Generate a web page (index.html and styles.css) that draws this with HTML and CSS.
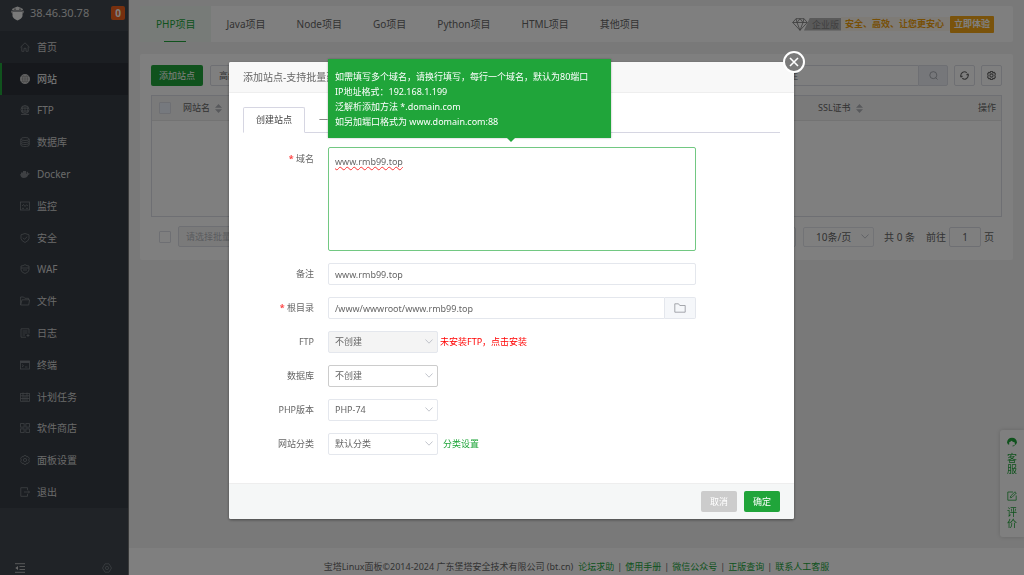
FILE: index.html
```html
<!DOCTYPE html>
<html lang="zh-CN">
<head>
<meta charset="utf-8">
<meta name="viewport" content="width=device-width, initial-scale=1">
<title>宝塔Linux面板</title>
<link rel="stylesheet" href="styles.css">
</head>
<body>
<div class="app">
  <aside class="sidebar">
    <header class="side-head">
      <svg class="logo" viewBox="0 0 13 15"><path d="M1 3 4 1.500 6.500.5 9 1.500 12 3 11.500 4.500H1.500Z" fill="#e4e4e4"/><path d="M1.500 5.500H11.500V10Q11 12.500 6.500 14.500 2 12.500 1.500 10Z" fill="#f4f4f4"/><path d="M0 4.500 2 5.500V8L.5 7ZM13 4.500 11 5.500V8L12.500 7Z" fill="#c4c4c4"/><path d="M3 3.200H5M8 3.200H10" stroke="#555" stroke-width=".8"/></svg>
      <span class="ip">38.46.30.78</span>
      <span class="badge">0</span>
    </header>
    <nav class="menu">
      <a href="#"><svg viewBox="0 0 10 10"><path d="M.5 5.200 5 .8 9.500 5.200M1.800 4.500V9.300H4V6.300H6V9.300H8.200V4.500"/></svg>首页</a>
      <a href="#" class="on"><svg viewBox="0 0 10 10"><circle cx="5" cy="5" r="4.600" fill="currentColor"/><path d="M5 .5V9.500M.5 5H9.500M1.300 2.800H8.700M1.300 7.200H8.700M3.500 1C2.300 3.500 2.300 6.500 3.500 9M6.500 1C7.700 3.500 7.700 6.500 6.500 9" stroke="#555" stroke-width=".4"/></svg>网站</a>
      <a href="#"><svg viewBox="0 0 10 10"><circle cx="5" cy="4.500" r="4"/><path d="M5 .5V8.500M1 3.200H9M1 6H9M3.200 1C2.300 3.500 2.300 5.500 3.200 8M6.800 1C7.700 3.500 7.700 5.500 6.800 8M1 9.500H9"/></svg>FTP</a>
      <a href="#"><svg viewBox="0 0 10 10"><ellipse cx="5" cy="2" rx="4.200" ry="1.500"/><path d="M.8 2V8C.8 10 9.200 10 9.200 8V2M.8 4C.8 6 9.200 6 9.200 4M.8 6C.8 8 9.200 8 9.200 6"/></svg>数据库</a>
      <a href="#"><svg viewBox="0 0 10 10"><path d="M.2 5H6.500Q6.300 3.500 7 2.500 8.300 3.300 8.300 4.300L9.800 4.500Q9.300 5.700 8.300 5.700 7 9 3.800 9 .5 8.800.2 5ZM1 3.600H6V5H1ZM3 2H6V4H3Z" fill="currentColor" stroke="none"/></svg>Docker</a>
      <a href="#"><svg viewBox="0 0 10 10"><rect x=".5" y="1" width="9" height="8"/><path d="M2 5 3.500 3.500 5 5.500 6.500 3.800 8 5M2 7.300H4M6 7.300H8"/></svg>监控</a>
      <a href="#"><svg viewBox="0 0 10 10"><path d="M5 .5 9 1.800V5.500Q8.500 8 5 9.500 1.500 8 1 5.500V1.800ZM3 4.800 4.500 6.300 7.200 3.700"/></svg>安全</a>
      <a href="#"><svg viewBox="0 0 10 10"><path d="M1 2Q3 2 5 .6 7 2 9 2V6Q8.500 8.500 5 9.500 1.500 8.500 1 6ZM1 4H9M3 6H7"/></svg>WAF</a>
      <a href="#"><svg viewBox="0 0 10 10"><path d="M.6 9V1H3.600L4.800 2.300H8.500V3.800M.6 9 2 3.800H9.600L8.700 9Z"/></svg>文件</a>
      <a href="#"><svg viewBox="0 0 10 10"><path d="M9 5.500V.8H1V9.200H6M2.500 3H7.500M2.500 5H7.500M2.500 7H5M6.500 7.500H9.500M8 6V9"/></svg>日志</a>
      <a href="#"><svg viewBox="0 0 10 10"><rect x=".5" y="1" width="9" height="8"/><path d="M.5 2H9.500" stroke-width="1.800"/><path d="M2 4.500 3.500 5.700 2 7M5 7H7.500"/></svg>终端</a>
      <a href="#"><svg viewBox="0 0 10 10"><rect x=".6" y="1.500" width="8.800" height="7.800"/><path d="M.6 3.800H9.400M3 .5V9M7 .5V9M5 3.800V9M.6 6.500H9.400"/></svg>计划任务</a>
      <a href="#"><svg viewBox="0 0 10 10"><rect x=".6" y=".6" width="3.500" height="3.500"/><rect x="5.900" y=".6" width="3.500" height="3.500"/><rect x=".6" y="5.900" width="3.500" height="3.500"/><rect x="5.900" y="5.900" width="3.500" height="3.500"/></svg>软件商店</a>
      <a href="#"><svg viewBox="0 0 10 10"><path d="M4 .6H6L6.500 1.800 8 1.600 9.300 3.300 8.700 5 9.300 6.700 8 8.400 6.500 8.200 6 9.400H4L3.500 8.200 2 8.400.7 6.700 1.300 5 .7 3.300 2 1.600 3.500 1.800Z"/><circle cx="5" cy="5" r="1.600"/></svg>面板设置</a>
      <a href="#"><svg viewBox="0 0 10 10"><path d="M7.500 3V.7H.8V9.300H7.500V7M4 5H9.500M8 3.500 9.500 5 8 6.500"/></svg>退出</a>
    </nav>
    <footer class="side-foot">
      <button aria-label="收起菜单"><svg viewBox="0 0 10 10"><path d="M0 .7H10M4.500 3.500H10M4.500 6.500H10M0 9.300H10" stroke="#ccc"/><path d="M3 3V7L.3 5Z" fill="#ccc" stroke="none"/></svg></button>
      <button aria-label="设置"><svg viewBox="0 0 10 10"><path d="M3 .8H7L9.500 5 7 9.200H3L.5 5Z"/><circle cx="5" cy="5" r="1.600"/></svg></button>
    </footer>
  </aside>

  <div class="page">
    <main class="main">
      <section class="topbar">
        <nav class="types">
          <a href="#" class="on">PHP项目</a><a href="#">Java项目</a><a href="#">Node项目</a><a href="#">Go项目</a><a href="#">Python项目</a><a href="#">HTML项目</a><a href="#">其他项目</a>
        </nav>
        <div class="promo">
          <svg class="gem" viewBox="0 0 16 13"><path d="M4 .7H12L15.300 4.500 8 12.300.7 4.500ZM.7 4.500H15.300M4 .7 5 4.500 8 12.300 11 4.500 12 .7M5 4.500 8 .7 11 4.500"/></svg>
          <span class="edition">企业版</span>
          <span class="slogan">安全、高效、让您更安心</span>
          <button class="try">立即体验</button>
        </div>
      </section>

      <section class="card">
        <div class="toolbar">
          <button class="btn primary">添加站点</button>
          <button class="btn plain">高级设置</button>
          <div class="tools">
            <div class="search"><input type="text" aria-label="搜索" placeholder="请输入域名或备注"><button aria-label="搜索"><svg viewBox="0 0 10 10"><circle cx="4.800" cy="4.600" r="3.900"/><path d="M7.500 7.500 9.500 9.500"/></svg></button></div>
            <button class="square" aria-label="刷新"><svg viewBox="0 0 10 10"><path d="M1.200 6.300A4 4 0 0 1 7.500 1.900M8.800 3.700A4 4 0 0 1 2.500 8.100M.1 5 1.200 6.600 2.800 5.500M9.900 5 8.800 3.400 7.200 4.500"/></svg></button>
            <button class="square" aria-label="列设置"><svg viewBox="0 0 10 10"><path d="M4 .6H6L6.500 1.800 8 1.600 9.300 3.300 8.700 5 9.300 6.700 8 8.400 6.500 8.200 6 9.400H4L3.500 8.200 2 8.400.7 6.700 1.300 5 .7 3.300 2 1.600 3.500 1.800Z"/><circle cx="5" cy="5" r="1.800"/></svg></button>
          </div>
        </div>
        <table class="sites">
          <thead><tr>
            <th class="c-check"><input type="checkbox" class="check tinted" aria-label="全选"></th>
            <th>网站名<svg class="sort" viewBox="0 0 7 9"><path d="M3.500 0 7 3.800H0ZM0 5.200H7L3.500 9Z"/></svg></th>
            <th class="c-ssl">SSL证书<svg class="sort" viewBox="0 0 7 9"><path d="M3.500 0 7 3.800H0ZM0 5.200H7L3.500 9Z"/></svg></th>
            <th class="c-op">操作</th>
          </tr></thead>
          <tbody><tr><td colspan="4"></td></tr></tbody>
        </table>
        <div class="pager">
          <input type="checkbox" class="check" aria-label="选择本页">
          <select class="batch" aria-label="批量操作" disabled><option>请选择批量操作</option></select>
          <div class="pages">
            <button class="turn" aria-label="下一页"></button>
            <div class="select"><select aria-label="每页条数"><option>10条/页</option></select><svg viewBox="0 0 8 5"><path d="M.5.5 4 4.200 7.500.5"/></svg></div>
            <span class="total">共 0 条</span>
            <label class="jump">前往<input type="text" value="1">页</label>
          </div>
        </div>
      </section>
    </main>
    <footer class="foot">
      <span>宝塔Linux面板©2014-2024 广东堡塔安全技术有限公司 (bt.cn)</span>
      <a href="#">论坛求助</a><i>|</i><a href="#">使用手册</a><i>|</i><a href="#">微信公众号</a><i>|</i><a href="#">正版查询</a><i>|</i><a href="#">联系人工客服</a>
    </footer>
  </div>

  <div class="float">
    <a href="#"><svg viewBox="0 0 10 10"><path d="M0 5.500Q.5 1 5 .8 9.500 1 10 5.500L9 7.500H7.800V5.500Q5.500 5 4.500 3.800 3.500 5 2.200 5.300V7.500H1Z" fill="currentColor" stroke="none"/><path d="M8.300 7.500Q7.500 9 5.500 9"/></svg>客服</a>
    <a href="#"><svg viewBox="0 0 10 10"><path d="M6 1H.8V9.200H9.200V4.500M3.300 6.700 3.700 5 8 .8 9.300 2 5 6.300Z"/></svg>评价</a>
  </div>
</div>

<div class="mask">
  <form class="modal" role="dialog" aria-labelledby="title">
    <button type="button" class="close" aria-label="关闭"><svg viewBox="0 0 10 10"><path d="M1 1 9 9M9 1 1 9"/></svg></button>
    <h1 class="modal-head" id="title">添加站点-支持批量建站</h1>
    <div class="modal-body">
      <div class="tabs"><button type="button" class="on">创建站点</button><button type="button">一键部署</button></div>
      <div class="row tall">
        <label for="domain"><b>*</b> 域名</label>
        <div class="field">
          <textarea id="domain" spellcheck="false">www.rmb99.top</textarea>
          <div class="tip" role="tooltip">如需填写多个域名，请换行填写，每行一个域名，默认为80端口<br>IP地址格式：192.168.1.199<br>泛解析添加方法 *.domain.com<br>如另加端口格式为 www.domain.com:88</div>
        </div>
      </div>
      <div class="row"><label for="remark">备注</label><div class="field"><input id="remark" type="text" value="www.rmb99.top"></div></div>
      <div class="row"><label for="root"><b>*</b> 根目录</label><div class="field joined"><input id="root" type="text" value="/www/wwwroot/www.rmb99.top"><button type="button" aria-label="选择目录"><svg viewBox="0 0 12 10"><path d="M.8.8H4.500L5.800 2.500H11.200V9.200H.8Z"/></svg></button></div></div>
      <div class="row"><label for="ftp">FTP</label><div class="select off"><select id="ftp" disabled><option>不创建</option></select><svg viewBox="0 0 8 5"><path d="M.5.5 4 4.200 7.500.5"/></svg></div><a href="#" class="warn">未安装FTP，点击安装</a></div>
      <div class="row"><label for="db">数据库</label><div class="select strong"><select id="db"><option>不创建</option></select><svg viewBox="0 0 8 5"><path d="M.5.5 4 4.200 7.500.5"/></svg></div></div>
      <div class="row"><label for="php">PHP版本</label><div class="select"><select id="php"><option>PHP-74</option></select><svg viewBox="0 0 8 5"><path d="M.5.5 4 4.200 7.500.5"/></svg></div></div>
      <div class="row"><label for="cat">网站分类</label><div class="select"><select id="cat"><option>默认分类</option></select><svg viewBox="0 0 8 5"><path d="M.5.5 4 4.200 7.500.5"/></svg></div><a href="#" class="more">分类设置</a></div>
    </div>
    <div class="modal-foot"><button type="button" class="btn cancel">取消</button><button type="submit" class="btn primary">确定</button></div>
  </form>
</div>
</body>
</html>
```
FILE: styles.css
```css
:root {
  --green: #20a53a;
  --line: #dcdfe6;
  --text: #666;
}

* { box-sizing: border-box; }

body {
  margin: 0;
  font: 9px/16px "Noto Sans", "Noto Sans CJK SC", sans-serif;
  color: var(--text);
  overflow: hidden;
}

button, input, select, textarea { font: inherit; color: inherit; margin: 0; }
button { border: 0; padding: 0; background: none; cursor: pointer; white-space: nowrap; }
select { appearance: none; }
a { color: inherit; text-decoration: none; }
svg { display: block; flex: none; fill: none; stroke: currentColor; stroke-width: 0.8; }
i { font-style: normal; }

.app { display: flex; min-height: 100vh; background: #f2f2f2; }

/* Sidebar */
.sidebar {
  display: flex;
  flex-direction: column;
  flex: none;
  width: 129px;
  height: 100vh;
  background: #40474f;
  border-right: 1px solid #777;
  color: #d4d4d4;
  font-size: 10px;
}
.side-head { display: flex; align-items: center; height: 31px; padding: 0 3px 5px 11px; }
.logo { width: 13px; height: 15px; stroke: none; }
.ip { margin-left: 6px; font-size: 11px; }
.badge {
  margin-left: auto;
  width: 14px;
  height: 14px;
  border-radius: 2px;
  background: #f0601c;
  color: #fff;
  font-weight: bold;
  line-height: 14px;
  text-align: center;
}
.menu { flex: 1; display: grid; grid-auto-rows: 1fr; background: #363c44; }
.menu a { display: flex; align-items: center; gap: 7px; padding-left: 18px; border-left: 2px solid transparent; }
.menu svg { width: 10px; height: 10px; color: #7c8187; }
.menu .on { background: #2c3138; border-color: var(--green); color: #fff; }
.menu .on svg { color: #d8d8d8; }
.side-foot {
  display: flex;
  justify-content: space-between;
  align-items: flex-end;
  height: 67px;
  padding: 0 16px 2px 15px;
  color: #777d84;
}
.side-foot svg { width: 10px; height: 10px; }

/* Page */
.page { flex: 1; min-width: 0; display: flex; flex-direction: column; }
.main { flex: 1; padding: 6px 11px; }
.topbar { display: flex; align-items: center; height: 36px; background: #fff; border-radius: 2px; padding-right: 19px; }
.types { display: flex; align-self: stretch; font-size: 10px; }
.types a { position: relative; display: flex; align-items: center; padding: 0 15px 0 16px; }
.types .on { background: #eef7f0; color: var(--green); }
.types .on::after { content: ""; position: absolute; left: 50%; bottom: 0; width: 22px; height: 1px; margin-left: -11px; background: var(--green); }

.promo { display: flex; align-items: center; margin-left: auto; color: #ee9f0c; font-weight: bold; }
.gem { width: 16px; height: 13px; color: #777; margin-right: -4px; position: relative; }
.edition { padding: 0 2px 0 8px; line-height: 13px; background: #b4b4b4; color: #808080; font-weight: normal; clip-path: polygon(6px 0, 100% 0, 100% 100%, 0 100%); }
.slogan { padding: 0 6px 0 4px; line-height: 14px; background: #fdf6ec; }
.try { height: 17px; padding: 0 4px; border-radius: 1px; background: #f4a716; color: #fff; font-weight: bold; }

.card { margin-top: 12px; padding: 11px 11px 13px; background: #fff; border-radius: 2px; }
.toolbar { display: flex; gap: 7px; }
.btn { min-width: 36px; height: 21px; padding: 0 8px; border-radius: 2px; }
.primary { background: var(--green); color: #fff; }
.plain { border: 1px solid var(--line); }
.tools { display: flex; gap: 6px; margin-left: auto; }
.search { display: flex; }
.search input { width: 200px; padding: 0 7px; border: 1px solid var(--line); border-right: 0; border-radius: 2px 0 0 2px; }
.search input::placeholder { color: #999; }
.search button { display: grid; place-items: center; width: 30px; background: #eceff5; border: 1px solid var(--line); border-radius: 0 2px 2px 0; color: #909399; }
.search svg, .square svg { width: 9px; height: 9px; }
.square { display: grid; place-items: center; width: 21px; height: 21px; border: 1px solid var(--line); border-radius: 2px; }
.square svg { stroke-width: 1.2; }

.sites { width: 100%; margin-top: 9px; border: 1px solid var(--line); border-spacing: 0; table-layout: fixed; }
.sites th { height: 25px; padding: 0; background: #f5f5f5; border-bottom: 1px solid #e6e6e6; font-weight: normal; text-align: left; }
.sites td { height: 95px; padding: 0; }
.c-check { width: 31px; }
.sites .c-check { padding-left: 7px; }
.c-ssl { width: 129px; }
.sites .c-op { width: 54px; padding-right: 5px; text-align: right; }
.sort { display: inline-block; width: 7px; height: 9px; margin-left: 5px; vertical-align: middle; fill: #b0b3b8; stroke: none; }
.check { appearance: none; display: block; flex: none; width: 12px; height: 12px; border: 1px solid var(--line); border-radius: 1px; background: #fff; }
.tinted { background: #edf2fc; }

.pager { display: flex; align-items: center; margin-top: 9px; padding: 0 8px; }
.batch { width: 110px; height: 21px; margin-left: 7px; padding: 0 7px; border: 1px solid var(--line); border-radius: 2px; background: #f5f5f5; color: #b4b7bd; opacity: 1; }
.pages { display: flex; align-items: center; margin-left: auto; font-size: 10px; }
.turn { width: 20px; height: 20px; margin-right: 7px; border: 1px solid var(--line); border-radius: 2px; }
.pages .select { width: 71px; }
.pages select { height: 20px; padding-left: 12px; }
.total { margin: 0 11px 0 10px; }
.jump { display: flex; align-items: center; gap: 3px; }
.jump input { width: 32px; height: 20px; border: 1px solid var(--line); border-radius: 2px; padding: 0; text-align: center; }

.foot { display: flex; justify-content: center; height: 27px; padding-top: 11px; background: #fff; white-space: nowrap; }
.foot a { color: var(--green); }
.foot span { margin-right: 5px; }
.foot i { width: 11px; text-align: center; }

.float {
  position: fixed;
  right: 0;
  bottom: 38px;
  display: grid;
  gap: 16px;
  width: 24px;
  padding: 7px 7px 8px;
  border-radius: 3px 0 0 3px;
  background: #fff;
  box-shadow: 0 0 4px rgba(0, 0, 0, 0.15);
  color: var(--green);
  font-size: 10px;
  line-height: 11px;
}
.float a { width: 10px; overflow-wrap: anywhere; }
.float svg { width: 10px; height: 10px; margin-bottom: 6px; }

/* Dialog */
.mask { position: fixed; inset: 0; display: grid; place-items: center; padding-top: 6px; padding-right: 1px; background: rgba(0, 0, 0, 0.5); }
.modal { position: relative; width: min(565px, 94vw); border-radius: 2px; background: #fff; box-shadow: 0 1px 3px rgba(0, 0, 0, 0.4); }
.close { position: absolute; top: -11px; right: -11px; display: grid; place-items: center; width: 22px; height: 22px; border: 2px solid #fff; border-radius: 50%; background: #7a7a7a; color: #fff; }
.close svg { width: 10px; height: 10px; stroke-width: 1.6; }
.modal-head { margin: 0; padding: 7px 14px; border-bottom: 1px solid #eee; border-radius: 2px 2px 0 0; background: #f8f8f8; font-size: 10px; font-weight: normal; }
.modal-body { display: grid; gap: 12px; padding: 14px 14px 28px; }
.tabs { display: flex; height: 26px; margin-bottom: 2px; border-bottom: 1px solid #d6d6e2; }
.tabs button { height: 26px; padding: 0 14px; }
.tabs .on { padding: 0 12px; border: 1px solid #d6d6e2; border-bottom-color: #fff; border-radius: 2px 2px 0 0; color: #444; background: #fff; }

.row { display: flex; align-items: center; }
.row label { flex: none; width: 71px; margin-right: 14px; text-align: right; }
.row b { color: #f44; }
.tall { align-items: flex-start; }
.tall label { padding-top: 4px; }
.field { position: relative; display: flex; flex: 1; max-width: 368px; }
.field input, .field textarea { flex: 1; min-width: 0; height: 22px; padding: 0 6px; border: 1px solid #e4e7ed; border-radius: 2px; background: #fff; }
.field textarea { height: 104px; padding: 6px; border-color: #72c882; resize: none; text-decoration: underline wavy #f33 1px; text-decoration-skip-ink: none; }
.joined input { border-radius: 2px 0 0 2px; }
.joined button { display: grid; place-items: center; width: 31px; border: 1px solid #e4e7ed; border-left: 0; border-radius: 0 2px 2px 0; background: #f5f7fa; color: #909399; }
.joined svg { width: 12px; height: 10px; }
.tip { position: absolute; left: 0; bottom: calc(100% + 9px); width: 283px; padding: 10px 7px 9px; background: var(--green); color: #fff; line-height: 15px; white-space: nowrap; box-shadow: 0 0 2px rgba(0, 0, 0, 0.3); }
.tip::after { content: ""; position: absolute; top: 100%; left: 179px; border: 4px solid transparent; border-top-color: var(--green); border-bottom: 0; }

.select { position: relative; width: 110px; }
.select select { display: block; width: 100%; height: 22px; padding: 0 18px 0 6px; border: 1px solid #e4e7ed; border-radius: 2px; background: #fff; opacity: 1; }
.pages .select select { height: 20px; padding-left: 12px; }
.select svg { position: absolute; right: 5px; top: calc(50% - 3px); width: 8px; height: 5px; color: #b4b8c0; pointer-events: none; }
.select.off select { background: #f4f4f4; }
.select.strong select { border-color: #ccc; }
.warn { margin-left: 2px; color: #f00; }
.more { margin-left: 5px; color: var(--green); }

.modal-foot { display: flex; justify-content: flex-end; gap: 7px; padding: 7px 14px; border-top: 1px solid #eee; border-radius: 0 0 2px 2px; background: #f5f7f7; }
.cancel { background: #ccc; color: #fff; }
```
